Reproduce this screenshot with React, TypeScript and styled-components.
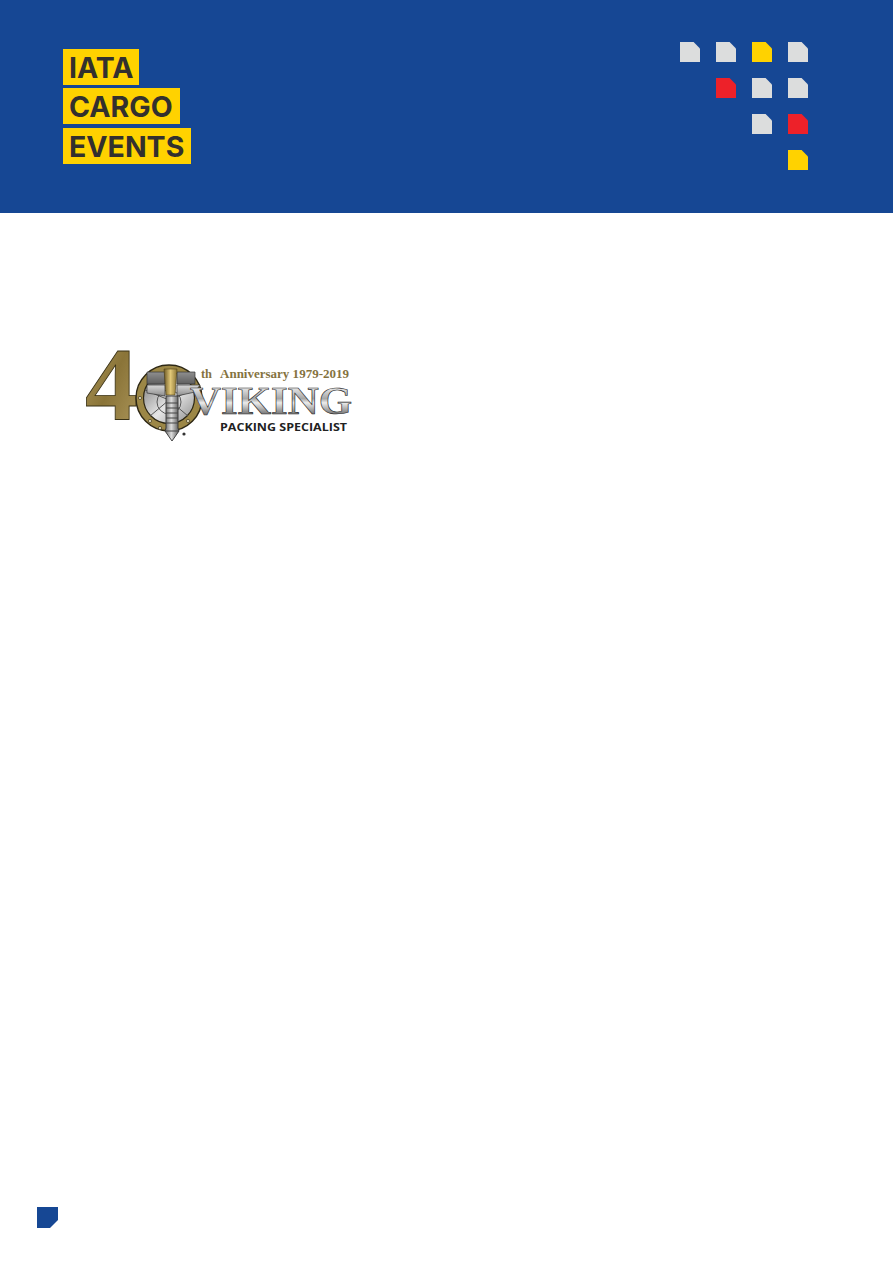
import React from "react";
import styled, { createGlobalStyle } from "styled-components";

type Tone = "grey" | "yellow" | "red" | "none";

const tones: Record<Tone, string> = {
  grey: "#dcdddd",
  yellow: "#ffd200",
  red: "#ed2129",
  none: "transparent",
};

const pattern: Tone[] = [
  "grey", "grey", "yellow", "grey",
  "none", "red", "grey", "grey",
  "none", "none", "grey", "red",
  "none", "none", "none", "yellow",
];

const GlobalStyle = createGlobalStyle`
  html, body {
    margin: 0;
    padding: 0;
    background: #fff;
    font-family: "Inter", "Liberation Sans", sans-serif;
  }
`;

const Page = styled.div`
  width: 893px;
  height: 1263px;
  display: flex;
  flex-direction: column;
  overflow: hidden;
  background: #fff;
`;

const Banner = styled.header`
  height: 213px;
  box-sizing: border-box;
  padding: 42px 85px 0 63px;
  display: flex;
  justify-content: space-between;
  align-items: flex-start;
  background: #164794;
`;

const Wordmark = styled.div`
  margin-top: 7px;
  display: flex;
  flex-direction: column;
  align-items: flex-start;
`;

const WordLine = styled.span<{ $width: number; $gap: number }>`
  width: ${(p) => p.$width}px;
  height: 36px;
  margin-bottom: ${(p) => p.$gap}px;
  box-sizing: border-box;
  padding-left: 6px;
  background: #ffd200;
  color: #33302e;
  font-size: 28.5px;
  font-weight: 700;
  line-height: 37px;
  white-space: nowrap;
`;

const Squares = styled.div`
  display: grid;
  grid-template-columns: repeat(4, 20px);
  grid-auto-rows: 20px;
  gap: 16px;
`;

const Square = styled.span<{ $tone: Tone }>`
  display: block;
  width: 20px;
  height: 20px;
  background: ${(p) => tones[p.$tone]};
  clip-path: polygon(0 0, 68% 0, 100% 32%, 100% 100%, 0 100%);
`;

const Content = styled.main`
  flex: 1;
  padding: 107px 0 0 83px;
`;

const Footer = styled.footer`
  padding: 0 0 35px 37px;
`;

const FooterMark = styled.span`
  display: block;
  width: 21px;
  height: 21px;
  background: #164794;
  clip-path: polygon(0 0, 100% 0, 100% 62%, 62% 100%, 0 100%);
`;

const VikingSvg = styled.svg`
  display: block;
  width: 280px;
  height: 125px;
`;

const VikingLogo: React.FC = () => (
  <VikingSvg viewBox="83 320 280 125" aria-label="Viking logo">
    <defs>
      <linearGradient id="gold" x1="0" y1="0" x2="1" y2="1">
        <stop offset="0" stopColor="#b5a062" />
        <stop offset="0.5" stopColor="#8a7438" />
        <stop offset="1" stopColor="#b09a5e" />
      </linearGradient>
      <linearGradient id="steel" gradientUnits="userSpaceOnUse" x1="0" y1="386" x2="0" y2="414">
        <stop offset="0" stopColor="#f2f2f2" />
        <stop offset="0.45" stopColor="#a6a6a6" />
        <stop offset="0.6" stopColor="#ececec" />
        <stop offset="1" stopColor="#777" />
      </linearGradient>
      <linearGradient id="shaft" x1="0" y1="0" x2="1" y2="0">
        <stop offset="0" stopColor="#666" />
        <stop offset="0.45" stopColor="#ddd" />
        <stop offset="1" stopColor="#555" />
      </linearGradient>
      <linearGradient id="disc" x1="0" y1="0" x2="1" y2="1">
        <stop offset="0" stopColor="#6e6e6e" />
        <stop offset="0.55" stopColor="#e6e6e6" />
        <stop offset="1" stopColor="#8a8a8a" />
      </linearGradient>
      <linearGradient id="blade" x1="0" y1="0" x2="1" y2="0">
        <stop offset="0" stopColor="#6e5a25" />
        <stop offset="0.5" stopColor="#e2c878" />
        <stop offset="1" stopColor="#8b7434" />
      </linearGradient>
      <linearGradient id="headTop" x1="0" y1="0" x2="0" y2="1">
        <stop offset="0" stopColor="#8f8f8f" />
        <stop offset="1" stopColor="#5f5f5f" />
      </linearGradient>
      <linearGradient id="headLow" x1="0" y1="0" x2="0" y2="1">
        <stop offset="0" stopColor="#d8d8d8" />
        <stop offset="1" stopColor="#8d8d8d" />
      </linearGradient>
    </defs>

    <text x="85" y="419" fontFamily="'Liberation Serif', serif" fontSize="104" fontWeight="700"
      fill="url(#gold)" stroke="#3a3216" strokeWidth="0.8" textLength="53" lengthAdjust="spacingAndGlyphs">4</text>

    <circle cx="169" cy="398" r="33" fill="#9c8746" stroke="#2d2714" strokeWidth="1.4" />
    <circle cx="169" cy="398" r="25.500" fill="url(#disc)" stroke="#2d2714" strokeWidth="1.2" />
    <g stroke="#4b4b4b" strokeWidth="0.9" fill="none">
      <path d="M169 400 L145 390 M169 400 L193 390 M169 400 L150 416 M169 400 L188 416" />
      <circle cx="169" cy="402" r="12" />
    </g>
    <g fill="#e0d9b8" stroke="#2d2714" strokeWidth="0.6">
      <circle cx="140" cy="398" r="1.600" />
      <circle cx="150" cy="421" r="1.600" />
      <circle cx="188" cy="421" r="1.600" />
      <circle cx="160" cy="428" r="1.600" />
    </g>

    <path d="M147 372 H165 V384 H147 Z" fill="url(#headTop)" stroke="#333" strokeWidth="0.7" />
    <path d="M147 385 H165 V396 L147 393 Z" fill="url(#headLow)" stroke="#333" strokeWidth="0.7" />
    <path d="M177 372 H195 V384 H177 Z" fill="url(#headTop)" stroke="#333" strokeWidth="0.7" />
    <path d="M177 385 H200 L195 392 L177 396 Z" fill="url(#headLow)" stroke="#333" strokeWidth="0.7" />
    <path d="M164 369 H177 L175 395 H166 Z" fill="url(#blade)" stroke="#4d3f18" strokeWidth="0.6" />
    <path d="M166 396 H178 V428 L179 431 L172 441 L165 431 L166 428 Z" fill="url(#shaft)" stroke="#333" strokeWidth="0.9" />
    <path d="M166 403 H178 M166 408 H178 M166 413 H178 M166 418 H178 M166 423 H178 M165 431 H179" stroke="#444" strokeWidth="1" />
    <circle cx="184" cy="434" r="1.600" fill="#333" />

    <text x="201" y="378" fontFamily="'Liberation Serif', serif" fontSize="13" fontWeight="700"
      fill="#85733f" textLength="11" lengthAdjust="spacingAndGlyphs">th</text>
    <text x="220" y="378" fontFamily="'Liberation Serif', serif" fontSize="13" fontWeight="700"
      fill="#85733f" textLength="129" lengthAdjust="spacingAndGlyphs">Anniversary 1979-2019</text>

    <text x="190" y="414" fontFamily="'Liberation Serif', serif" fontSize="41" fontWeight="700"
      fill="url(#steel)" stroke="#222" strokeWidth="0.6" textLength="162" lengthAdjust="spacingAndGlyphs">VIKING</text>

    <text x="220" y="431" fontFamily="'Open Sans', 'Liberation Sans', sans-serif" fontSize="11" fontWeight="700"
      fill="#222" textLength="127" lengthAdjust="spacingAndGlyphs">PACKING SPECIALIST</text>
  </VikingSvg>
);

const App: React.FC = () => (
  <Page>
    <GlobalStyle />
    <Banner>
      <Wordmark>
        <WordLine $width={76} $gap={3}>IATA</WordLine>
        <WordLine $width={117} $gap={4}>CARGO</WordLine>
        <WordLine $width={128} $gap={0}>EVENTS</WordLine>
      </Wordmark>
      <Squares>
        {pattern.map((tone, i) => (
          <Square key={i} $tone={tone} />
        ))}
      </Squares>
    </Banner>
    <Content>
      <VikingLogo />
    </Content>
    <Footer>
      <FooterMark />
    </Footer>
  </Page>
);

export default App;
